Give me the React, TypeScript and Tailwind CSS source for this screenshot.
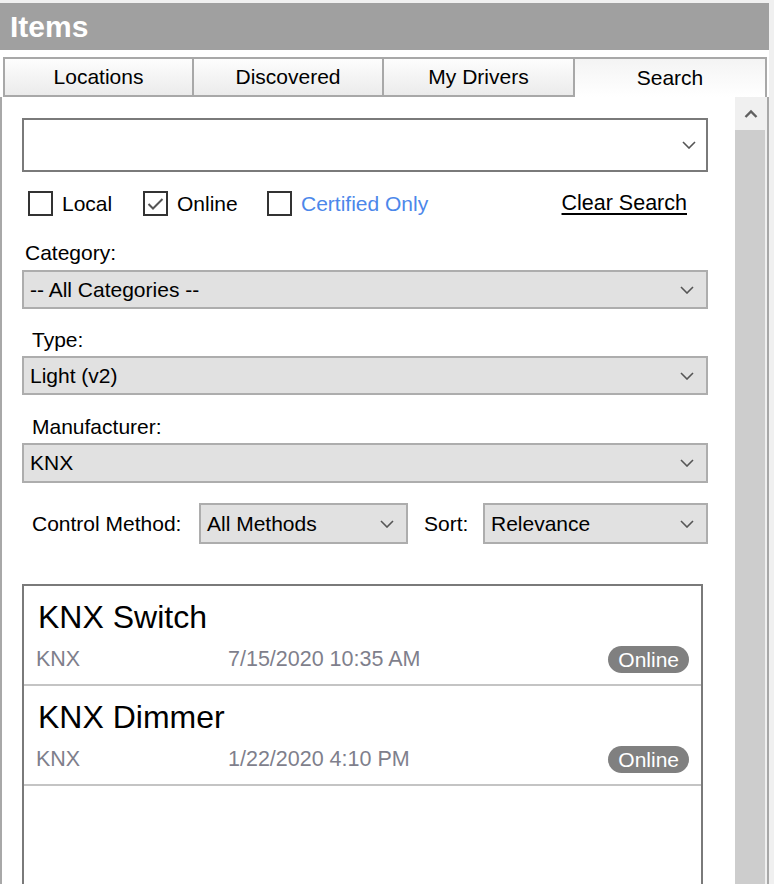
import React from "react";

const font = { fontFamily: '"Liberation Sans", Arial, sans-serif' };

function Chevron({ className = "" }: { className?: string }) {
  return (
    <svg width="14" height="8" viewBox="0 0 14 8" className={className}>
      <path d="M1 1 L7 7 L13 1" fill="none" stroke="#555" strokeWidth="1.6" />
    </svg>
  );
}

function Select({ value, className = "" }: { value: string; className?: string }) {
  return (
    <div className={`flex items-center bg-[#e1e1e1] border-2 border-[#adadad] pl-[6px] pr-[12px] ${className}`}>
      <span className="flex-1 text-[21px] text-black">{value}</span>
      <Chevron />
    </div>
  );
}

function Checkbox({ checked, label, color = "text-black", className = "" }: { checked?: boolean; label: string; color?: string; className?: string }) {
  return (
    <div className={`flex items-center gap-[9px] ${className}`}>
      <div className="w-[25px] h-[25px] border-2 border-[#333] bg-white flex items-center justify-center">
        {checked && (
          <svg width="17" height="14" viewBox="0 0 17 14">
            <path d="M1.5 7 L6 11.5 L15.5 2" fill="none" stroke="#555" strokeWidth="2" />
          </svg>
        )}
      </div>
      <span className={`text-[21px] ${color}`}>{label}</span>
    </div>
  );
}

function Tab({ label, active, className = "" }: { label: string; active?: boolean; className?: string }) {
  return (
    <div
      className={`flex items-center justify-center text-[21px] text-black border-2 border-[#a8a8a8] ${
        active
          ? "border-b-0 bg-gradient-to-b from-[#f4f4f4] to-white"
          : "bg-gradient-to-b from-[#fdfdfd] to-[#ebebeb]"
      } ${className}`}
    >
      {label}
    </div>
  );
}

function ResultItem({ title, date }: { title: string; date: string }) {
  return (
    <div className="border-b-2 border-[#c4c4c4] h-[100px] pt-[14px] pl-[12px] pr-[12px]">
      <div className="text-[32px] leading-[34px] text-black pl-[2px]">{title}</div>
      <div className="flex items-center mt-[12px] h-[27px]">
        <span className="w-[192px] text-[21.5px] text-[#7f7f8c]">KNX</span>
        <span className="flex-1 text-[21.5px] text-[#7f7f8c]">{date}</span>
        <span className="bg-[#808080] text-white text-[21px] leading-[27px] rounded-full px-[10px]">Online</span>
      </div>
    </div>
  );
}

export default function App() {
  return (
    <div className="w-[774px] h-[884px] bg-[#f0f0f0] overflow-hidden pt-[3px] pr-[5px] flex flex-col" style={font}>
      <div className="h-[47px] bg-[#a0a0a0] flex items-center pl-[10px]">
        <span className="text-white font-bold text-[30px]">Items</span>
      </div>
      <div className="flex-1 bg-white flex flex-col">
        <div className="pt-[7px] pl-[3px] pr-[2px] flex h-[47px]">
          <Tab label="Locations" className="w-[191px]" />
          <Tab label="Discovered" className="w-[192px] -ml-[2px]" />
          <Tab label="My Drivers" className="w-[193px] -ml-[2px]" />
          <Tab label="Search" active className="flex-1 -ml-[2px]" />
        </div>
        <div className="flex-1 flex border-l-2 border-r-2 border-[#a8a8a8] overflow-hidden">
          <div className="flex-1 pl-[20px] pr-[27px] pt-[21px] flex flex-col">
            <div className="h-[54px] border-2 border-[#7a7a7a] flex items-center justify-end pr-[10px]">
              <Chevron />
            </div>
            <div className="flex items-center mt-[19px] pl-[6px] h-[25px]">
              <Checkbox label="Local" className="w-[115px]" />
              <Checkbox label="Online" checked className="w-[124px]" />
              <Checkbox label="Certified Only" color="text-[#4c87ea]" />
              <div className="flex-1" />
              <span className="text-[21.5px] text-black underline underline-offset-[3px] mr-[21px]">Clear Search</span>
            </div>
            <div className="mt-[25px] text-[21px] leading-[24px] pl-[3px]">Category:</div>
            <Select value="-- All Categories --" className="mt-[5px] h-[39px]" />
            <div className="mt-[19px] text-[21px] leading-[24px] pl-[10px]">Type:</div>
            <Select value="Light (v2)" className="mt-[4px] h-[39px]" />
            <div className="mt-[20px] text-[21px] leading-[24px] pl-[10px]">Manufacturer:</div>
            <Select value="KNX" className="mt-[4px] h-[40px]" />
            <div className="mt-[20px] flex items-center h-[41px]">
              <span className="text-[21px] pl-[10px] w-[177px]">Control Method:</span>
              <Select value="All Methods" className="w-[209px] h-[41px]" />
              <span className="text-[21px] ml-[16px] w-[59px]">Sort:</span>
              <Select value="Relevance" className="flex-1 h-[41px]" />
            </div>
            <div className="mt-[40px] mr-[5px] flex-1 border-2 border-b-0 border-[#7a7a7a]">
              <ResultItem title="KNX Switch" date="7/15/2020 10:35 AM" />
              <ResultItem title="KNX Dimmer" date="1/22/2020 4:10 PM" />
            </div>
          </div>
          <div className="w-[32px] flex flex-col bg-[#f0f0f0]">
            <div className="h-[33px] flex items-center justify-center">
              <svg width="14" height="10" viewBox="0 0 14 10">
                <path d="M1.5 8 L7 2.5 L12.5 8" fill="none" stroke="#606060" strokeWidth="2.4" />
              </svg>
            </div>
            <div className="flex-1 bg-[#cdcdcd] mr-[2px]" />
          </div>
        </div>
      </div>
    </div>
  );
}
